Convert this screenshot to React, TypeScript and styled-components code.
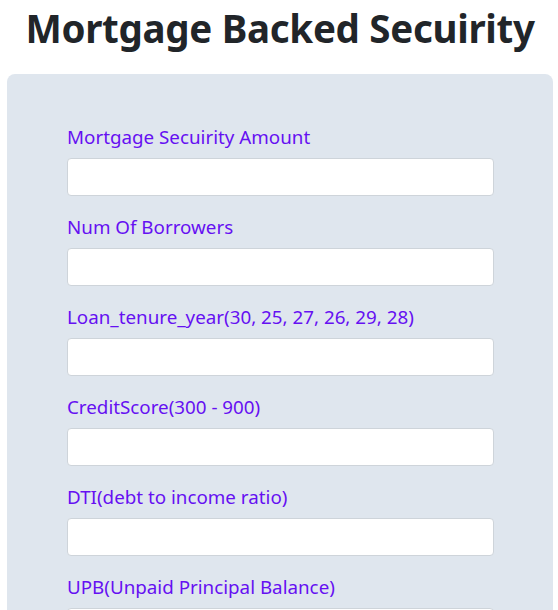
import React from "react";
import styled, { createGlobalStyle } from "styled-components";

const GlobalStyle = createGlobalStyle`
  html, body { margin: 0; padding: 0; background: #ffffff; }
  body { font-family: "Noto Sans", "Open Sans", Arial, sans-serif; color: #212529; }
  * { box-sizing: border-box; }
`;

const Page = styled.div`
  display: flex;
  flex-direction: column;
  align-items: stretch;
  padding: 0 5px 0 7px;
`;

const Title = styled.h1`
  margin: 0 0 22px;
  padding-top: 4px;
  font-size: 38.5px;
  line-height: 48px;
  font-weight: 700;
  text-align: center;
  color: #212529;
  letter-spacing: -0.3px;
  white-space: nowrap;
`;

const Panel = styled.form`
  background: #dfe6ee;
  border-radius: 8px;
  padding: 48px 59px 40px 60px;
  display: flex;
  flex-direction: column;
  gap: 16px;
`;

const Field = styled.div`
  display: flex;
  flex-direction: column;
`;

const Label = styled.label`
  color: #6610f2;
  font-size: 18.8px;
  line-height: 30px;
  height: 36px;
`;

const Input = styled.input`
  height: 38px;
  width: 100%;
  border: 1px solid #ced4da;
  border-radius: 4px;
  background: #ffffff;
  padding: 6px 12px;
  font-size: 16px;
  font-family: inherit;
  outline: none;
`;

const fields = [
  "Mortgage Secuirity Amount",
  "Num Of Borrowers",
  "Loan_tenure_year(30, 25, 27, 26, 29, 28)",
  "CreditScore(300 - 900)",
  "DTI(debt to income ratio)",
  "UPB(Unpaid Principal Balance)",
];

export default function App() {
  return (
    <>
      <GlobalStyle />
      <Page>
        <Title>Mortgage Backed Secuirity</Title>
        <Panel>
          {fields.map((f) => (
            <Field key={f}>
              <Label>{f}</Label>
              <Input type="text" />
            </Field>
          ))}
        </Panel>
      </Page>
    </>
  );
}
